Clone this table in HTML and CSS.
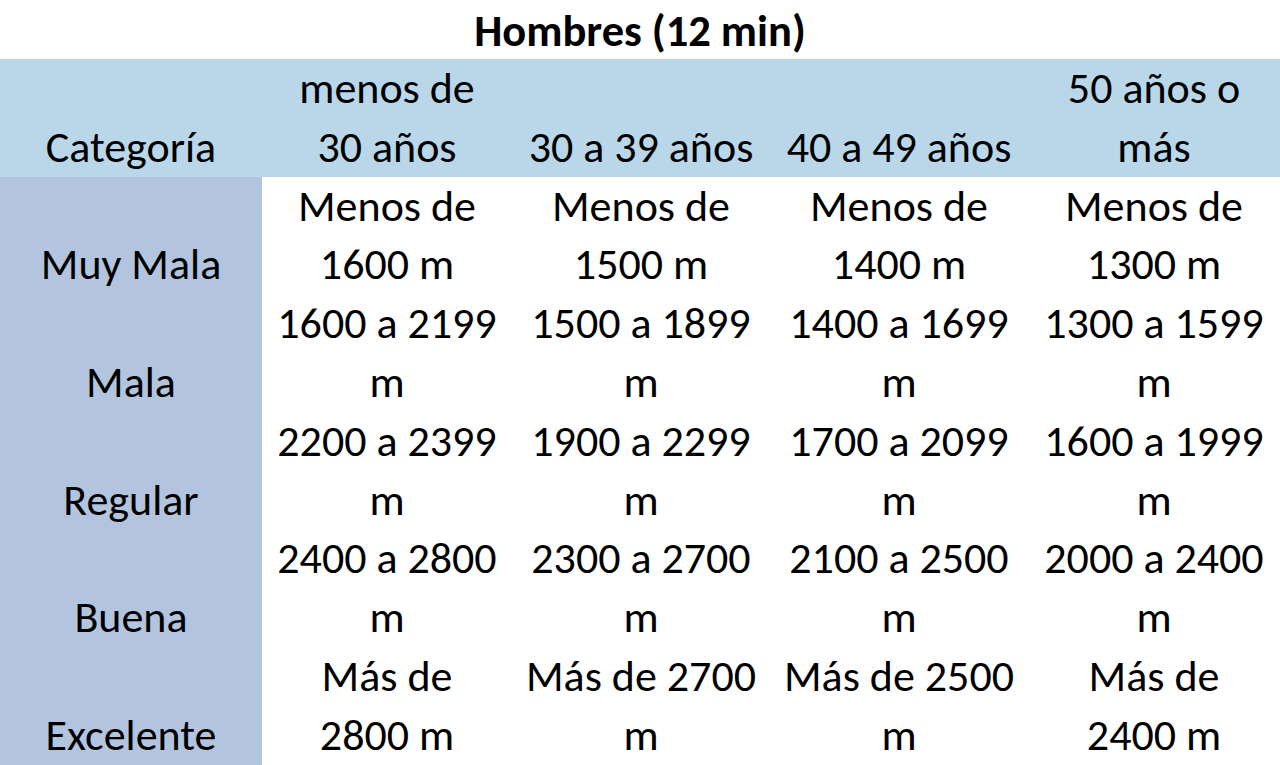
FILE: index.html
```html
<!DOCTYPE html>
<html lang="es">
<head>
<meta charset="utf-8">
<title>Hombres (12 min)</title>
<link rel="stylesheet" href="styles.css">
</head>
<body>
<div class="sheet">
  <div class="title">Hombres (12 min)</div>
  <table class="grid">
    <colgroup>
      <col class="c1"><col class="c2"><col class="c3"><col class="c4"><col class="c5">
    </colgroup>
    <thead>
      <tr class="head">
        <th>Categoría</th>
        <th>menos de<br>30 años</th>
        <th>30 a 39 años</th>
        <th>40 a 49 años</th>
        <th>50 años o<br>más</th>
      </tr>
    </thead>
    <tbody>
      <tr>
        <th>Muy Mala</th>
        <td>Menos de<br>1600 m</td>
        <td>Menos de<br>1500 m</td>
        <td>Menos de<br>1400 m</td>
        <td>Menos de<br>1300 m</td>
      </tr>
      <tr>
        <th>Mala</th>
        <td>1600 a 2199<br>m</td>
        <td>1500 a 1899<br>m</td>
        <td>1400 a 1699<br>m</td>
        <td>1300 a 1599<br>m</td>
      </tr>
      <tr>
        <th>Regular</th>
        <td>2200 a 2399<br>m</td>
        <td>1900 a 2299<br>m</td>
        <td>1700 a 2099<br>m</td>
        <td>1600 a 1999<br>m</td>
      </tr>
      <tr>
        <th>Buena</th>
        <td>2400 a 2800<br>m</td>
        <td>2300 a 2700<br>m</td>
        <td>2100 a 2500<br>m</td>
        <td>2000 a 2400<br>m</td>
      </tr>
      <tr>
        <th>Excelente</th>
        <td>Más de<br>2800 m</td>
        <td>Más de 2700<br>m</td>
        <td>Más de 2500<br>m</td>
        <td>Más de<br>2400 m</td>
      </tr>
    </tbody>
  </table>
</div>
</body>
</html>
```

FILE: styles.css
```css
html, body {
  margin: 0;
  padding: 0;
  background: #ffffff;
}
body {
  font-family: Carlito, Lato, "Open Sans", sans-serif;
  color: #000000;
}
.sheet {
  width: 1280px;
  height: 765px;
  overflow: hidden;
}
.title {
  height: 59px;
  line-height: 62px;
  text-align: center;
  font-weight: 700;
  font-size: 44.5px;
}
.grid {
  width: 1280px;
  border-collapse: collapse;
  table-layout: fixed;
  font-size: 44px;
  line-height: 58.8px;
}
.c1 { width: 262px; }
.c2 { width: 250px; }
.c3 { width: 258px; }
.c4 { width: 258px; }
.c5 { width: 252px; }
.grid th, .grid td {
  padding: 0;
  text-align: center;
  vertical-align: bottom;
  font-weight: 400;
  white-space: nowrap;
  height: 117.6px;
}
.head th {
  background: #b9d7e8;
}
tbody th {
  background: #b3c5de;
}
tbody td {
  background: #ffffff;
}
```
